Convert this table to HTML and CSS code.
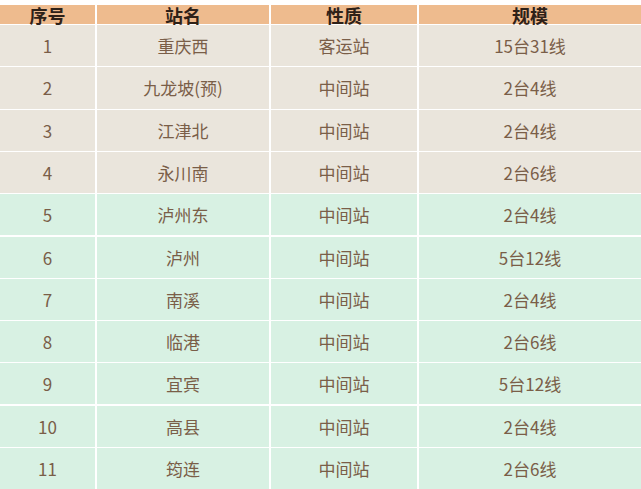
FILE: index.html
```html
<!DOCTYPE html>
<html lang="zh">
<head>
<meta charset="utf-8">
<link rel="stylesheet" href="styles.css">
</head>
<body>
<div class="table">
  <div class="cell head">序号</div><div class="cell head">站名</div><div class="cell head">性质</div><div class="cell head">规模</div>
  <div class="cell a">1</div><div class="cell a">重庆西</div><div class="cell a">客运站</div><div class="cell a">15台31线</div>
  <div class="cell a">2</div><div class="cell a">九龙坡(预)</div><div class="cell a">中间站</div><div class="cell a">2台4线</div>
  <div class="cell a">3</div><div class="cell a">江津北</div><div class="cell a">中间站</div><div class="cell a">2台4线</div>
  <div class="cell a">4</div><div class="cell a">永川南</div><div class="cell a">中间站</div><div class="cell a">2台6线</div>
  <div class="cell b">5</div><div class="cell b">泸州东</div><div class="cell b">中间站</div><div class="cell b">2台4线</div>
  <div class="cell b">6</div><div class="cell b">泸州</div><div class="cell b">中间站</div><div class="cell b">5台12线</div>
  <div class="cell b">7</div><div class="cell b">南溪</div><div class="cell b">中间站</div><div class="cell b">2台4线</div>
  <div class="cell b">8</div><div class="cell b">临港</div><div class="cell b">中间站</div><div class="cell b">2台6线</div>
  <div class="cell b">9</div><div class="cell b">宜宾</div><div class="cell b">中间站</div><div class="cell b">5台12线</div>
  <div class="cell b">10</div><div class="cell b">高县</div><div class="cell b">中间站</div><div class="cell b">2台4线</div>
  <div class="cell b">11</div><div class="cell b">筠连</div><div class="cell b">中间站</div><div class="cell b">2台6线</div>
</div>
</body>
</html>
```
FILE: styles.css
```css
html, body {
  margin: 0;
  padding: 0;
  background: #ffffff;
}
body {
  padding-top: 5px;
  font-family: "Noto Sans CJK SC", "Noto Sans", sans-serif;
}
.table {
  display: grid;
  grid-template-columns: 95px 172px 146px 1fr;
  grid-template-rows: 19px repeat(11, 1fr);
  column-gap: 2px;
  row-gap: 1.2px;
  height: 484px;
  width: 641px;
  background: #ffffff;
}
.cell {
  display: flex;
  align-items: center;
  justify-content: center;
  font-size: 17px;
  color: #7a5e48;
  line-height: 1;
}
.head {
  background: #eebb8e;
  color: #2e2118;
  font-weight: 700;
  font-size: 18px;
}
.a {
  background: #eae5dc;
}
.b {
  background: #d8f1e3;
}
```
